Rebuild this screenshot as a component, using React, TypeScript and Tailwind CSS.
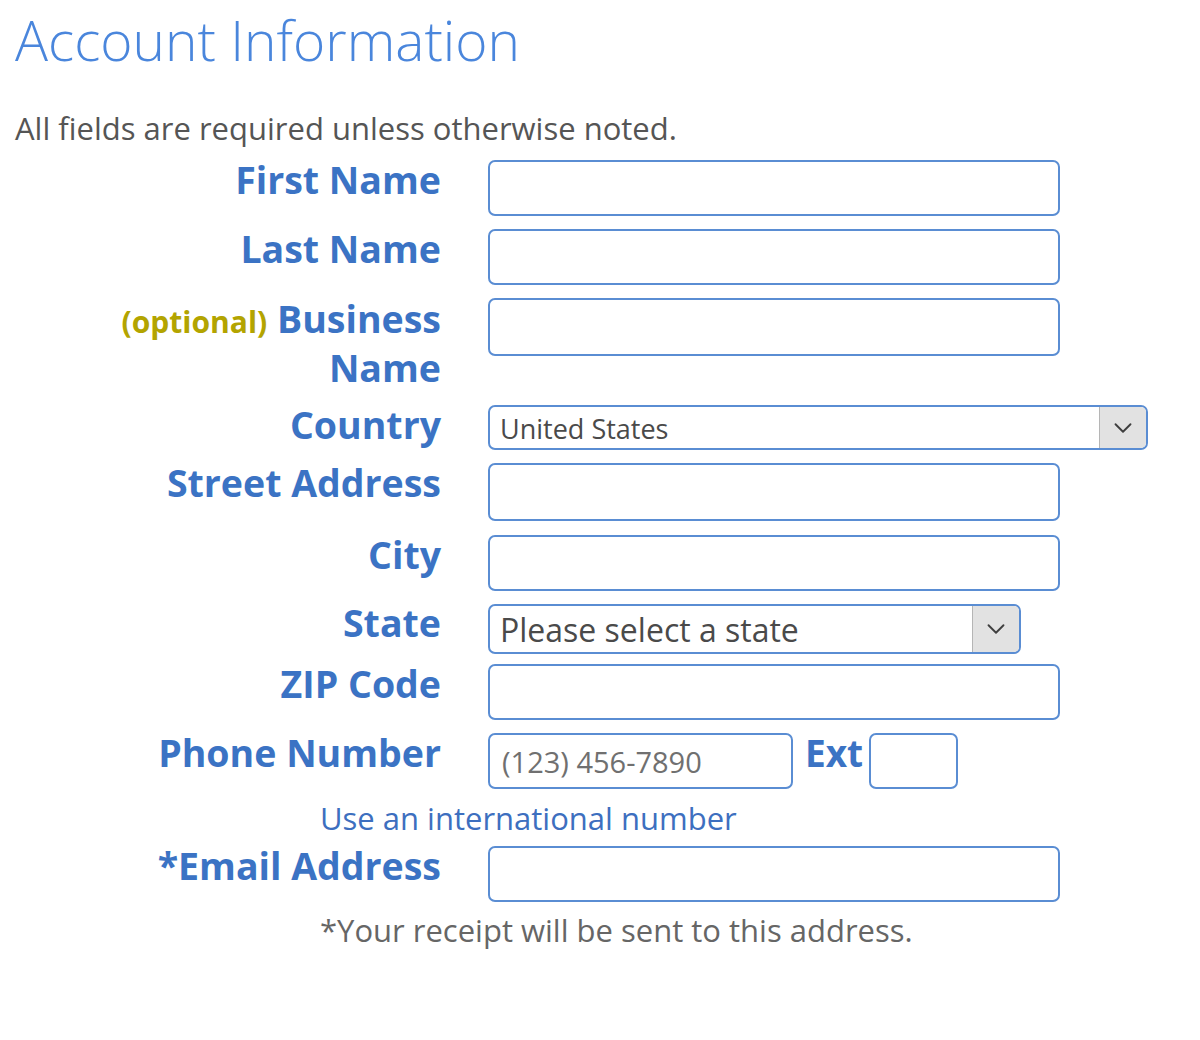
import React from 'react'
import { ChevronDown } from 'lucide-react'

type Row = { label: React.ReactNode; h: string; field: React.ReactNode; labelClass?: string }

const TextBox: React.FC<{ className?: string; placeholder?: string }> = ({ className = '', placeholder }) => (
    <div className={`border-2 border-[#5a8dd3] rounded-[7px] bg-white flex items-center px-[12px] ${className}`}>
        {placeholder && <span className="text-[29px] text-[#707070] leading-none">{placeholder}</span>}
    </div>
)

const SelectBox: React.FC<{ className?: string; text: string; textClass: string }> = ({ className = '', text, textClass }) => (
    <div className={`border-2 border-[#5a8dd3] rounded-[7px] bg-white flex items-stretch overflow-hidden ${className}`}>
        <span className={`flex-1 flex items-center pl-[10px] text-[#4a4a4a] leading-none ${textClass}`}>{text}</span>
        <span className="w-[47px] shrink-0 bg-[#e2e2e2] border-l border-[#b5b5b5] flex items-center justify-center">
            <ChevronDown size={30} strokeWidth={1.5} color="#3f3f3f" />
        </span>
    </div>
)

const App: React.FC = () => {
    const rows: Row[] = [
        { label: 'First Name', h: 'h-[69px]', field: <TextBox className="w-[572px] h-[56px]" /> },
        { label: 'Last Name', h: 'h-[69px]', field: <TextBox className="w-[572px] h-[56px]" /> },
        {
            label: <><span className="text-[30px] text-[#b3a400]">(optional)</span> Business Name</>,
            h: 'h-[107px]',
            labelClass: 'leading-[46px] -mt-[2px] pl-[100px]',
            field: <TextBox className="w-[572px] h-[58px]" />,
        },
        {
            label: 'Country', h: 'h-[58px]',
            field: <SelectBox className="w-[660px] h-[45px]" text="United States" textClass="text-[27px] pt-[2px]" />,
        },
        { label: 'Street Address', h: 'h-[72px]', field: <TextBox className="w-[572px] h-[58px]" /> },
        { label: 'City', h: 'h-[68px]', field: <TextBox className="w-[572px] h-[56px]" /> },
        {
            label: 'State', h: 'h-[61px]',
            field: <SelectBox className="w-[533px] h-[50px] mt-[1px]" text="Please select a state" textClass="text-[32px] pt-[2px]" />,
        },
        { label: 'ZIP Code', h: 'h-[69px]', field: <TextBox className="w-[572px] h-[56px]" /> },
        {
            label: 'Phone Number', h: 'h-[70px]',
            field: (
                <div className="flex items-start">
                    <TextBox className="w-[305px] h-[56px]" placeholder="(123) 456-7890" />
                    <span className="ml-[12px] text-[37px] font-bold leading-[40px] text-[#3b73c4]">Ext</span>
                    <TextBox className="ml-[6px] w-[89px] h-[56px]" />
                </div>
            ),
        },
    ]

    return (
        <div className="min-h-[1040px] bg-white font-['Open_Sans',sans-serif]">
            <div className="pl-[15px]">
                <h1 className="pt-[12px] text-[55px] font-light leading-none text-[#4a86dc]">Account Information</h1>
                <p className="mt-[46px] text-[31px] leading-none text-[#555]">All fields are required unless otherwise noted.</p>
            </div>

            <div className="mt-[16px]">
                {rows.map((row, i) => (
                    <div key={i} className={`flex items-start ${row.h}`}>
                        <div className={`w-[441px] shrink-0 text-right text-[37.5px] font-bold leading-[40px] text-[#3b73c4] ${row.labelClass ?? ''}`}>
                            {row.label}
                        </div>
                        <div className="ml-[47px]">{row.field}</div>
                    </div>
                ))}

                <div className="h-[43px] pl-[320px]">
                    <p className="text-[31px] leading-none text-[#3d6fbf]">Use an international number</p>
                </div>

                <div className="flex items-start h-[69px]">
                    <div className="w-[441px] shrink-0 text-right text-[37.5px] font-bold leading-[40px] text-[#3b73c4]">*Email Address</div>
                    <div className="ml-[47px]"><TextBox className="w-[572px] h-[56px]" /></div>
                </div>

                <div className="pl-[320px]">
                    <p className="text-[31px] leading-none text-[#666]">*Your receipt will be sent to this address.</p>
                </div>
            </div>
        </div>
    )
}

export default App
